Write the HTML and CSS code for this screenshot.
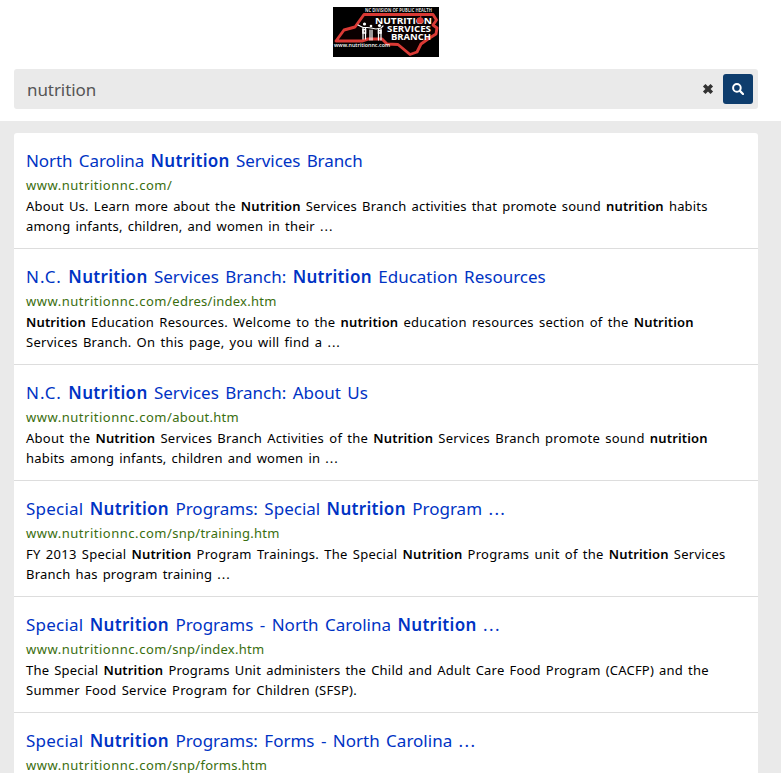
FILE: index.html
```
<!DOCTYPE html>
<html lang="en">
<head>
<meta charset="utf-8">
<title>nutrition - Search Results</title>
<link rel="stylesheet" href="styles.css">
</head>
<body>
<header class="header">
  <svg class="logo" viewBox="0 0 106 50" role="img" aria-label="Nutrition Services Branch">
    <rect width="106" height="50" fill="#000"/>
    <path d="M31 7.500H100L103.500 13L100 18L104 21L103 27L95 32L88 37L84 45L77 47.500L65 37.500L54 37L49 32L35 32L29 34L3 34L11 23L22 20Z" fill="#0a0000" stroke="#d93a35" stroke-width="2.900" stroke-linejoin="round"/>
    <text class="logo-top" x="32" y="4.800" textLength="67" lengthAdjust="spacingAndGlyphs">NC DIVISION OF PUBLIC HEALTH</text>
    <g fill="none" stroke="#fff" stroke-width="1.200" stroke-linecap="round">
      <path d="M25 18L30 20.500H34L38 21L43 22L48 21L50 19"/>
      <path d="M30 21V32M32.500 21V32M37 23V33M39 23V33M45.500 22V33M48 22V33"/>
      <path d="M30 22.500H32.500V26H30ZM45.500 23.500H48V26H45.500Z" stroke-width="1.500"/>
    </g>
    <g fill="#fff"><circle cx="31.500" cy="17" r="1.600"/><circle cx="38" cy="19" r="1.300"/><circle cx="46.500" cy="18.500" r="1.600"/></g>
    <text class="logo-name" x="42" y="16.500" textLength="57" lengthAdjust="spacingAndGlyphs">NUTRITION</text>
    <text class="logo-name" x="54" y="24.500" textLength="44" lengthAdjust="spacingAndGlyphs">SERVICES</text>
    <text class="logo-name" x="58" y="32.500" textLength="40" lengthAdjust="spacingAndGlyphs">BRANCH</text>
    <circle cx="87" cy="13.500" r="3.300" fill="#d93a35"/>
    <path d="M87 11L88 9" stroke="#d93a35"/>
    <text class="logo-url" x="1" y="40" textLength="56" lengthAdjust="spacingAndGlyphs">www.nutritionnc.com</text>
  </svg>
</header>
<div class="search">
  <span class="query">nutrition</span>
  <svg class="clear" viewBox="0 0 12 12"><path d="M2.2 2.2L9.8 9.8M9.8 2.2L2.2 9.8" stroke="#333" stroke-width="3.6"/></svg>
  <span class="go"><svg viewBox="0 0 12 12" width="12" height="12"><circle cx="4.9" cy="4.9" r="3.8" fill="none" stroke="#fff" stroke-width="2"/><path d="M7.9 7.9L11 11" stroke="#fff" stroke-width="2.2" stroke-linecap="round"/></svg></span>
</div>
<main class="results">
  <div class="list">
    <article class="result">
      <h2 class="title tight">North Carolina <b>Nutrition</b> Services Branch</h2>
      <p class="url"><span class="domain">www.nutritionnc.com/</span></p>
      <p class="text">About Us. Learn more about the <b>Nutrition</b> Services Branch activities that promote sound <b>nutrition</b> habits<br>among infants, children, and women in their <span class="dots">...</span></p>
    </article>
    <article class="result">
      <h2 class="title"><span class="abbr">N.C.</span> <b>Nutrition</b> Services Branch: <b>Nutrition</b> Education Resources</h2>
      <p class="url"><span class="domain">www.nutritionnc.com/</span>edres/index.htm</p>
      <p class="text wide"><b>Nutrition</b> Education Resources. Welcome to the <b>nutrition</b> education resources section of the <b>Nutrition</b><br>Services Branch. On this page, you will find a <span class="dots">...</span></p>
    </article>
    <article class="result">
      <h2 class="title"><span class="abbr">N.C.</span> <b>Nutrition</b> Services Branch: About Us</h2>
      <p class="url"><span class="domain">www.nutritionnc.com/</span>about.htm</p>
      <p class="text"><span class="wide">About the <b>Nutrition</b> Services Branch Activities of the <b>Nutrition</b> Services Branch promote sound <b>nutrition</b></span><br>habits among infants, children and women in <span class="dots">...</span></p>
    </article>
    <article class="result">
      <h2 class="title"><span class="lead">Special</span> <b>Nutrition</b> Programs: Special <b>Nutrition</b> Program <span class="dots">...</span></h2>
      <p class="url"><span class="domain">www.nutritionnc.com/</span>snp/training.htm</p>
      <p class="text"><span class="wide">FY 2013 Special <b>Nutrition</b> Program Trainings. The Special <b>Nutrition</b> Programs unit of the <b>Nutrition</b> Services</span><br>Branch has program training <span class="dots">...</span></p>
    </article>
    <article class="result">
      <h2 class="title"><span class="lead">Special</span> <b>Nutrition</b> Programs - North Carolina <b>Nutrition</b> <span class="dots">...</span></h2>
      <p class="url"><span class="domain">www.nutritionnc.com/</span>snp/index.htm</p>
      <p class="text">The Special <b>Nutrition</b> Programs Unit administers the Child and Adult Care Food Program (CACFP) and the<br><span class="wide">Summer Food Service Program for Children (SFSP).</span></p>
    </article>
    <article class="result">
      <h2 class="title"><span class="lead">Special</span> <b>Nutrition</b> Programs: Forms - North Carolina <span class="dots">...</span></h2>
      <p class="url"><span class="domain">www.nutritionnc.com/</span>snp/forms.htm</p>
    </article>
  </div>
</main>
</body>
</html>
```

FILE: styles.css
```
* { box-sizing: border-box; }
body {
  display: flex;
  flex-direction: column;
  margin: 0;
  height: 773px;
  overflow: hidden;
  background: #fff;
  color: #000;
  font-family: "Noto Sans", "Open Sans", sans-serif;
}
.header { flex: none; height: 69px; padding: 7px 9px 0 0; display: flex; justify-content: center; align-items: flex-start; }
.logo { width: 106px; height: 50px; display: block; }
.logo text { font-family: "Open Sans", sans-serif; fill: #fff; font-weight: 700; }
.logo .logo-top { font-size: 4.5px; fill: #ddd; }
.logo .logo-name { font-size: 8.5px; }
.logo .logo-url { font-size: 6px; font-weight: 600; }
.search {
  flex: none;
  display: flex;
  align-items: center;
  height: 40px;
  margin: 0 23px 12px 14px;
  padding: 0 5px 0 13px;
  background: #eaeaea;
  border-radius: 3px;
}
.query { flex: 1; font-size: 17px; line-height: 40px; padding-top: 2px; color: #555; letter-spacing: -0.08px; }
.clear { width: 12px; height: 12px; margin-right: 9px; }
.go {
  display: flex;
  align-items: center;
  justify-content: center;
  width: 30px;
  height: 30px;
  border-radius: 3px;
  background: #0e3d6d;
}
.results { flex: 1; min-height: 0; overflow: hidden; background: #eaeaea; padding: 12px 23px 0 14px; }
.list { background: #fff; border-radius: 3px 3px 0 0; }
.result { height: 116px; padding: 16px 12px 0; border-bottom: 1px solid #ddd; white-space: nowrap; }
.title { margin: 0; font-size: 17px; line-height: 24px; font-weight: 400; color: #0033c4; word-spacing: 2px; }
.title b { font-weight: 600; letter-spacing: 0.3px; }
.title.tight { letter-spacing: -0.08px; }
.abbr { letter-spacing: 1px; }
.lead { letter-spacing: 0.22px; }
.url { margin: 0; font-size: 13px; line-height: 24px; color: #3a6e0e; letter-spacing: 0.25px; }
.domain { letter-spacing: 0.52px; }
.text { margin: -1px 0 0; font-size: 13px; line-height: 20px; letter-spacing: 0.2px; word-spacing: 1.5px; }
.text b { font-weight: 600; letter-spacing: 0.15px; }
.wide { letter-spacing: 0.27px; }
.dots { letter-spacing: 1.4px; }
.text .dots { letter-spacing: 1px; }
```
